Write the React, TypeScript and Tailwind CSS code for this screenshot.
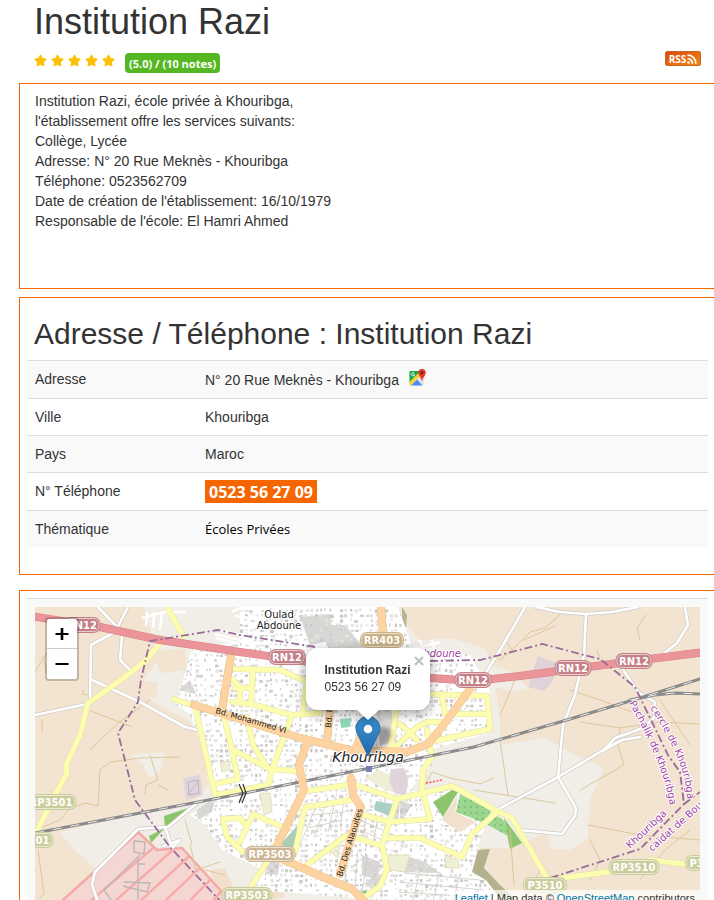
import React from "react";
import { FaStar } from "react-icons/fa";

const ORANGE_ROADS = [
  "M381 607L384 650L376 700L355 750",
  "M231 655L222 710",
  "M194 705L240 719L300 738L350 750L407 752L428 744L442 727L470 689",
  "M308 740L299 765L304 790L275 850L284 860L330 880L352 889L366 903",
  "M331 700L327 742",
  "M351 778L353 795L361 807L340 874",
];

const YELLOW_ROADS = [
  "M167 607L184 637",
  "M163 640L145 661L125 677L88 703L80 735L66 765L67 773L55 795L37 831",
  "M174 699L195 706L215 795L268 785L272 770L292 715",
  "M214 784L238 779L232 750L223 712",
  "M233 750L270 769L297 771",
  "M247 717L253 745L267 767",
  "M235 669L280 670L307 682",
  "M253 670L251 704L292 715L320 713",
  "M232 702L251 704M232 679L240 687L240 703M235 688L251 688",
  "M307 682L303 711",
  "M390 750L397 708M392 750L417 727L427 722L443 722",
  "M400 724L417 740",
  "M427 730L432 757L423 770L422 789L430 819L390 822L363 815",
  "M420 694L487 696L490 729L430 742",
  "M442 697L445 714L488 714",
  "M307 791L353 784L397 799L452 786L474 798L495 810L512 818L548 880L600 873L634 868",
  "M650 860L700 866",
  "M397 799L382 845L387 870L380 886L365 897",
  "M307 807L350 800",
  "M305 807L295 852",
  "M308 864L347 835L382 846",
  "M388 838L420 838L462 857L472 834L495 814",
  "M287 829L253 814L240 842M223 820L227 837L243 852M223 819L240 818L246 826",
  "M267 862L250 888",
];

const WHITE_ROADS = [
  "M35 715L87 704",
  "M90 703L91 645L115 632L128 607",
  "M98 607L118 628",
  "M122 635L120 660L130 670",
  "M92 680L140 702L185 727L197 730",
  "M525 607L500 650L485 674",
  "M536 607L560 612L586 614L612 612L638 607",
  "M586 614L584 655L575 695L563 725L558 777L499 809",
  "M558 777L600 752L622 740L640 737",
  "M558 777L576 808L575 816L562 834L520 830",
  "M685 607L688 625L677 643L662 655",
  "M622 668L638 692L655 702L654 718L643 728L615 738L604 750",
  "M97 900L92 884L95 872L138 829L168 827L197 803",
  "M165 827L172 848L180 840L163 846",
];

const TRACKS = [
  "M35 672L44 657L63 630M44 657L46 673",
  "M42 720L42 732M84 690L82 694L88 695",
  "M35 830L60 820L70 808L85 803L98 806L100 770L110 762L140 758L180 757",
  "M88 710L117 721L132 727M90 750L118 723L150 700",
  "M38 850L44 894L40 897M150 755L158 780L146 785L145 794M158 785L168 790",
  "M500 660L512 650L530 632L545 628L560 615M512 650L505 640",
  "M640 640L637 628L646 615M515 680L500 715M600 660L597 650",
  "M580 722L620 728L660 722L700 724M620 728L618 745L624 765L580 790",
  "M500 740L508 795M474 790L555 803M570 690L600 700L640 715",
  "M588 825L640 835L700 840M510 830L514 885M660 700L690 745",
  "M640 880L665 850L690 830M524 640L555 626M540 870L525 900",
  "M185 820L192 845M205 870L225 875M590 840L600 860L590 880",
  "M425 785L432 772L450 778L480 784L494 778M190 845L196 870L220 862",
];

const BOUNDARIES = [
  "M315 647L240 635L218 630L150 641L141 680L138 702L118 733L135 800L170 847L222 903",
  "M430 661L480 660L542 644L600 659L635 687L668 755L680 772L684 804L640 849L550 878",
  "M684 804L700 792",
];

const RAILS = [
  "M35 833L240 794L305 781L370 768L474 747L560 722L640 698L700 679",
  "M630 700L655 695L675 693L700 694",
];

const URBAN =
  "M192 648L240 642L240 607L398 607L412 645L470 655L490 690L492 732L430 750L432 765L410 790L455 790L490 815L480 840L474 868L505 900L380 900L255 890L262 870L222 850L205 825L190 815L215 797L203 745L190 715L176 705Z";

type Block = { x: number; y: number; w: number; h: number; tone: string };

const TONES = ["#d3d1ce", "#e2e0dd", "#c9c7c5", "#e8e5df", "#dbdbdb"];

// Small city blocks scattered on a slightly irregular grid.
function cityBlocks(): Block[] {
  const out: Block[] = [];
  let seed = 71;
  const next = () => {
    seed = (seed * 1103515245 + 12345) % 2147483648;
    return seed / 2147483648;
  };
  for (let y = 608; y < 904; y += 5) {
    for (let x = 174; x < 510; x += 5) {
      const a = next();
      const b = next();
      const c = next();
      if (a > 0.25) {
        out.push({ x: x + b * 2, y: y + c * 2, w: 1 + c * 3, h: 1 + a * 2.5, tone: TONES[Math.floor(b * 5)] });
      }
    }
  }
  return out;
}

const BLOCKS = cityBlocks();

function Roads({ paths, stroke, width }: { paths: string[]; stroke: string; width: number }) {
  return (
    <g fill="none" stroke={stroke} strokeWidth={width} strokeLinejoin="round" strokeLinecap="round">
      {paths.map((d) => (
        <path key={d} d={d} />
      ))}
    </g>
  );
}

function Shield({ x, y, w, label, fill }: { x: number; y: number; w: number; label: string; fill: string }) {
  return (
    <g>
      <rect x={x - w / 2} y={y - 8} width={w} height={16} rx={7} fill={fill} />
      <rect x={x - w / 2 + 1.5} y={y - 6.5} width={w - 3} height={13} rx={5.5} fill="none" stroke="#fff" strokeOpacity={0.6} />
      <text x={x} y={y + 4} textAnchor="middle" fontSize={10} fontWeight="bold" fill="#fff">
        {label}
      </text>
    </g>
  );
}

function CityMap() {
  return (
    <svg
      className="block h-full w-full"
      viewBox="35 607 665 300"
      preserveAspectRatio="xMidYMid slice"
      fontFamily='"DejaVu Sans", sans-serif'
      role="img"
      aria-label="Khouribga"
    >
      <defs>
        <clipPath id="urban">
          <path d={URBAN} />
        </clipPath>
        <clipPath id="airfield">
          <path d="M138 832L157 850L182 848L222 892L224 910L52 910Z" />
        </clipPath>
        <pattern id="orchard" width="6" height="6" patternUnits="userSpaceOnUse">
          <rect width="6" height="6" fill="#9bd68f" />
          <circle cx="3" cy="3" r="0.8" fill="#5ea458" />
        </pattern>
        <path id="pachalik" d="M629 703Q649 738 659 766Q667 785 671 812" />
        <path id="cercle" d="M650 708Q669 736 679 762Q686 780 688 804" />
      </defs>

      <rect x="35" y="607" width="665" height="300" fill="#f2e4d0" />
      <path
        d="M144 607L400 607L405 625L420 640L450 638L485 648L492 665L500 720L500 745L545 738L575 755L604 768L590 800L588 838L570 850L550 849L548 832L512 848L480 848L500 907L115 907L60 832L195 800L208 785L203 745L190 722L150 700L143 680L158 660Z"
        fill="#f1eee8"
      />
      <path d="M154 652L185 648L187 670L160 673ZM143 680L158 683L156 697L142 695Z" fill="#f2e4d0" />
      <path d="M130 755L165 752L160 772L150 778L143 765ZM488 665L512 672L528 688L512 692L486 684Z" fill="#f1eee8" />
      <path d="M402 607L407 615L406 628L402 622Z" fill="#b5b48f" />
      <path d="M35 838L60 836L98 872L60 907L35 907Z" fill="#f2e4d0" />
      <path d="M210 870L225 868L235 890L215 895ZM258 872L284 868L284 898L262 900Z" fill="#f2e0cd" />

      <path d={URBAN} fill="#fff" />
      <g clipPath="url(#urban)">
        <path
          d="M300 617L330 614L334 640L310 645ZM318 625L345 625L370 655L330 652ZM376 707L390 703L397 742L380 745ZM265 862L280 860L278 875L266 874ZM400 800L412 805L400 824ZM403 855L425 862L440 873L398 872ZM195 800L215 800L212 812L198 820ZM362 855L380 862L378 880L362 875ZM392 812L400 800L398 826ZM178 690L190 680L196 694ZM375 875L384 880L378 892L364 884Z"
          fill="#d8d7d5"
        />
        {BLOCKS.map((b, i) => (
          <rect key={i} x={b.x} y={b.y} width={b.w} height={b.h} fill={b.tone} />
        ))}
        <path
          d="M388 855L410 855L405 872L390 870ZM260 793L270 793L272 812L264 815ZM220 762L230 761L230 770L222 772ZM445 855L458 860L460 868L446 868ZM328 850L340 845L338 858Z"
          fill="#efefd6"
          stroke="#d9d3b0"
          strokeWidth="0.6"
        />
      </g>
      <path d="M365 778L378 770L400 778L405 795L385 790Z" fill="#efefd6" />
      <g fill="none" stroke="#fff" strokeWidth="2.5">
        <path d="M142 618L165 612L186 612M147 612L146 626M154 612L153 628M162 613L160 630M215 634L240 640M216 638L240 644M217 630L250 636M232 612L240 608L260 610L250 618L235 616M410 650L440 642M420 640L424 655M432 640L436 656" />
      </g>
      <g fill="none" stroke="#cfcac4" strokeWidth="0.8">
        <path d="M320 797L300 845M328 797L314 838M336 797L328 832M344 800L340 828M312 815L345 812M308 828L343 820M335 850L350 860M360 820L394 835M360 830L390 843M366 815L363 838M378 818L373 842M404 873L480 880M400 882L484 890M398 892L490 898M420 870L412 905M440 872L432 905M460 874L452 905M348 847L345 880M358 850L355 886M368 855L362 892" />
      </g>

      <path d="M391 769L404 768L408 780L406 796L394 793L389 780ZM183 778L200 775L203 795L186 800Z" fill="#dfd3dc" />
      <path d="M188 782L198 780L199 793L189 795ZM188 795L199 780" fill="none" stroke="#bba9ba" strokeWidth="0.8" />
      <path d="M538 656L560 664L552 682L544 691L528 687Z" fill="#dfd3d8" />
      <path d="M376 801L393 804L390 816L374 810Z" fill="#a9d0c6" />
      <path d="M297 826L295 848L280 845Z" fill="#a9cdb8" />
      <path d="M340 719L351 718L350 727L341 728Z" fill="#8fd9b6" />
      <path d="M164 816L188 808L165 828ZM149 836L165 828L151 843ZM433 802L452 790L458 792L443 817ZM504 818L522 843L510 849ZM361 892L366 890L368 896Z" fill="#8dc56c" />
      <path d="M460 794L491 811L484 823L456 812ZM494 814L506 822L508 836L488 825Z" fill="url(#orchard)" />
      <path d="M458 795L455 812L476 822L460 832L442 820L444 815Z" fill="#f2e0cd" />
      <path d="M478 850L490 849L484 868L500 885L522 905L505 905L486 880L472 872Z" fill="#b3b28c" />

      <g clipPath="url(#airfield)">
        <rect x="50" y="830" width="176" height="80" fill="#f4d7d2" />
        <path
          d="M40 920L150 822M62 925L172 832M88 925L182 842M114 925L196 850M140 925L208 860M166 925L218 872M192 925L226 886"
          stroke="#f9a9a6"
          strokeWidth="2.4"
        />
        <path
          d="M138 858L138 907M104 890L140 855M104 890L116 907M134 841L145 842L144 854L134 852ZM124 882L150 883L147 892L123 886M138 864L145 864"
          stroke="#bdb6b6"
          strokeWidth="1.4"
          fill="none"
        />
      </g>
      <path d="M52 910L138 832L157 850L182 848L222 892" fill="none" stroke="#f7a9a6" strokeWidth="2.5" />

      <Roads paths={TRACKS} stroke="#dcc79c" width={1} />
      <Roads paths={WHITE_ROADS} stroke="#cfcbc6" width={4} />
      <Roads paths={WHITE_ROADS} stroke="#ffffff" width={2.6} />
      <Roads paths={YELLOW_ROADS} stroke="#e2dfae" width={6} />
      <Roads paths={YELLOW_ROADS} stroke="#fdfdb0" width={5} />
      <Roads paths={RAILS} stroke="#8a8a8a" width={3} />
      <g fill="none" stroke="#e9e9e9" strokeWidth="1" strokeDasharray="9 9">
        {RAILS.map((d) => (
          <path key={d} d={d} />
        ))}
      </g>
      <Roads paths={ORANGE_ROADS} stroke="#ecc08c" width={8} />
      <Roads paths={ORANGE_ROADS} stroke="#fdd3a2" width={7} />
      <Roads
        paths={["M30 616L100 627L160 640L240 652L310 662L430 678L474 681L520 676L573 669L634 661L705 652"]}
        stroke="#d67f85"
        width={8}
      />
      <Roads
        paths={["M30 616L100 627L160 640L240 652L310 662L430 678L474 681L520 676L573 669L634 661L705 652"]}
        stroke="#eb959a"
        width={7}
      />
      <g fill="none" stroke="#9a6a9a" strokeWidth="1.8" strokeDasharray="8 3 2 3">
        {BOUNDARIES.map((d) => (
          <path key={d} d={d} />
        ))}
      </g>
      <path d="M239 784L243 793L239 803M243 784L246 793L242 803" fill="none" stroke="#333" strokeWidth="1.2" />
      <path d="M426 783L442 780" stroke="#f55" strokeWidth="1.6" strokeDasharray="2 1.5" />
      <rect x="366" y="766" width="6" height="6" fill="#7b7fb5" />

      <Shield x={82} y={625} w={37} label="RN12" fill="#c58087" />
      <Shield x={287} y={657} w={37} label="RN12" fill="#c58087" />
      <Shield x={473} y={680} w={37} label="RN12" fill="#c58087" />
      <Shield x={573} y={668} w={37} label="RN12" fill="#c58087" />
      <Shield x={634} y={661} w={37} label="RN12" fill="#c58087" />
      <Shield x={382} y={640} w={44} label="RR403" fill="#c9b183" />
      <Shield x={270} y={854} w={51} label="RP3503" fill="#cdb693" />
      <Shield x={247} y={895} w={51} label="RP3503" fill="#cacd9b" />
      <Shield x={51} y={802} w={51} label="RP3501" fill="#cacd9b" />
      <Shield x={28} y={840} w={51} label="RP3501" fill="#cacd9b" />
      <Shield x={634} y={867} w={51} label="RP3510" fill="#cacd9b" />
      <Shield x={545} y={885} w={44} label="P3510" fill="#cacd9b" />
      <Shield x={707} y={863} w={44} label="P3510" fill="#cacd9b" />

      <g fill="#222" stroke="#fff" strokeWidth="2" strokeLinejoin="round" paintOrder="stroke">
        <text x="279" y="618" fontSize="10" textAnchor="middle">Oulad</text>
        <text x="279" y="629" fontSize="10" textAnchor="middle">Abdoune</text>
        <text x="368" y="762" fontSize="14" fontStyle="italic" textAnchor="middle">Khouribga</text>
      </g>
      <g fill="#222" fontSize="8">
        <text transform="translate(215 713) rotate(16)">Bd. Mohammed VI</text>
        <text transform="translate(342 877) rotate(-73)">Bd. Des Alaouites</text>
        <text transform="translate(331 728) rotate(-86)">Bd. El Massira</text>
      </g>
      <g fill="#a33fa6" stroke="#fff" strokeWidth="2" strokeLinejoin="round" paintOrder="stroke" fontSize="10">
        <text x="461" y="657" fontStyle="italic" textAnchor="end">Abdoune</text>
        <text>
          <textPath href="#pachalik">Pachalik de Khouribga</textPath>
        </text>
        <text>
          <textPath href="#cercle">cercle de Khouribga</textPath>
        </text>
        <text transform="translate(630 849) rotate(-43)">Khouribga</text>
        <text transform="translate(652 852) rotate(-42)">caïdat de Bou</text>
      </g>
    </svg>
  );
}

function MarkerPin() {
  return (
    <svg className="block h-[41px] w-[25px] overflow-visible" viewBox="0 0 25 41" aria-hidden="true">
      <defs>
        <linearGradient id="pin" x1="0" y1="0" x2="0" y2="1">
          <stop offset="0" stopColor="#3c93d3" />
          <stop offset="1" stopColor="#2068ab" />
        </linearGradient>
        <filter id="soft" x="-50%" y="-50%" width="200%" height="200%">
          <feGaussianBlur stdDeviation="2" />
        </filter>
      </defs>
      <path d="M13 40L22 12Q36 8 36 20Q34 28 13 40Z" fill="#000" opacity="0.3" filter="url(#soft)" />
      <path
        d="M12.5 0.5C5.8 0.5 0.5 5.8 0.5 12.3C0.5 15.4 2 18.4 3.6 21.2L12.5 40L21.4 21.2C23 18.4 24.5 15.4 24.5 12.3C24.5 5.8 19.2 0.5 12.5 0.5Z"
        fill="url(#pin)"
        stroke="#2a6ba5"
      />
      <circle cx="12.5" cy="13" r="4.3" fill="#fff" />
    </svg>
  );
}

function GoogleMapsIcon() {
  return (
    <svg className="h-[17px] w-[17px]" viewBox="0 0 17 17" aria-hidden="true">
      <rect x="0.5" y="2" width="14.5" height="14.5" rx="1" fill="#e4e6ea" />
      <path d="M0.5 3Q0.5 2 1.5 2H12L0.5 14Z" fill="#1fa745" />
      <path d="M0.5 13L10 3.5L12 6L1.5 16.5H0.5Z" fill="#fdd22e" />
      <path d="M2 16.5L8 10.5L13.5 16.5Z" fill="#4a8af4" />
      <path d="M5.3 4.3A1.6 1.6 0 1 0 5.6 5.7H4.2" fill="none" stroke="#fff" strokeWidth="0.9" />
      <path d="M13 0A3.8 3.8 0 0 0 9.2 3.8C9.2 6.5 12 8 13 12.5C14 8 16.8 6.5 16.8 3.8A3.8 3.8 0 0 0 13 0Z" fill="#e33b2e" />
      <circle cx="13" cy="3.8" r="1.5" fill="#7e1a12" />
    </svg>
  );
}

function RssIcon() {
  return (
    <svg className="h-[10px] w-[10px]" viewBox="0 0 10 10" fill="none" stroke="#fff" strokeWidth="1.7" aria-hidden="true">
      <path d="M0.5 1.2A8 8 0 0 1 8.8 9.8M0.5 4.6A4.8 4.8 0 0 1 5.4 9.8" />
      <circle cx="1.5" cy="8.5" r="1.3" fill="#fff" stroke="none" />
    </svg>
  );
}

const DETAILS = [
  "Institution Razi, école privée à Khouribga,",
  "l'établissement offre les services suivants:",
  "Collège, Lycée",
  "Adresse: N° 20 Rue Meknès - Khouribga",
  "Téléphone: 0523562709",
  "Date de création de l'établissement: 16/10/1979",
  "Responsable de l'école: El Hamri Ahmed",
];

function Row({ label, children }: { label: string; children: React.ReactNode }) {
  return (
    <tr className="border-t border-[#dddddd] odd:bg-[#f9f9f9]">
      <th scope="row" className="w-[170px] p-2 text-left align-top font-normal">
        {label}
      </th>
      <td className="p-2 align-top">{children}</td>
    </tr>
  );
}

export default function App() {
  return (
    <div className="h-screen overflow-hidden bg-white font-['Liberation_Sans',Arial,sans-serif] text-sm leading-5 text-[#333333]">
      <main className="-mr-0.5 ml-[19px]">
        <header className="px-[15px]">
          <h1 className="pt-0.5 text-4xl leading-10">Institution Razi</h1>
          <div className="flex items-start justify-between pb-2.5 pt-[9px]">
            <div className="flex items-center gap-2.5">
              <div className="flex gap-1 pb-1 text-[#ffc107]" role="img" aria-label="5.0">
                {[1, 2, 3, 4, 5].map((n) => (
                  <FaStar key={n} className="h-[13px] w-[13px]" />
                ))}
              </div>
              <span className="mt-0.5 h-5 rounded bg-[#55b823] px-1 font-['Open_Sans',sans-serif] text-[11px] font-bold leading-[22px] text-white">
                (5.0) / (10 notes)
              </span>
            </div>
            <a
              href="#rss"
              className="flex h-[15px] w-9 items-center justify-center gap-px rounded-[2px] border border-[#c9682c] bg-linear-to-br from-[#d9480f] to-[#f5870a] font-['Open_Sans',sans-serif] text-[10px] font-bold text-white"
            >
              RSS
              <RssIcon />
            </a>
          </div>
        </header>

        <section className="border border-[#f26500] px-[15px] pb-[57px] pt-[7px]">
          {DETAILS.map((line) => (
            <p key={line}>{line}</p>
          ))}
        </section>

        <section className="mt-2 border border-[#f26500] px-[7px] pb-[27px] pt-[19px]">
          <h2 className="mb-2.5 pl-[7px] text-3xl leading-[33px]">Adresse / Téléphone : Institution Razi</h2>
          <table className="w-full border-collapse">
            <tbody>
              <Row label="Adresse">
                <div className="flex h-[21px] items-start gap-2.5">
                  <span className="pt-px">N° 20 Rue Meknès - Khouribga</span>
                  <a href="#maps" aria-label="Google Maps">
                    <GoogleMapsIcon />
                  </a>
                </div>
              </Row>
              <Row label="Ville">Khouribga</Row>
              <Row label="Pays">Maroc</Row>
              <Row label="N° Téléphone">
                <div className="flex h-[21px] items-center">
                  <a
                    href="tel:0523562709"
                    className="h-[23px] bg-[#f56600] px-1 font-['Open_Sans',sans-serif] text-base font-bold leading-6 text-white"
                  >
                    0523 56 27 09
                  </a>
                </div>
              </Row>
              <Row label="Thématique">
                <a href="#ecoles" className="font-['Open_Sans',sans-serif] text-[13px] text-black">
                  Écoles Privées
                </a>
              </Row>
            </tbody>
          </table>
        </section>

        <section className="mt-[15px] border border-[#f26500] p-[7px]">
          <div className="border-t border-[#dddddd] bg-[#f9f9f9] p-2">
            <div className="relative h-[300px] overflow-hidden bg-[#dddddd]">
              <CityMap />

              <div className="absolute left-2.5 top-2.5 flex w-[34px] flex-col overflow-hidden rounded border-2 border-black/20 bg-white bg-clip-padding text-black">
                <button type="button" aria-label="Zoom in" className="flex h-[30px] items-center justify-center border-b border-[#cccccc]">
                  <svg className="h-[14px] w-[14px]" viewBox="0 0 14 14" stroke="currentColor" aria-hidden="true">
                    <path d="M0.5 7H13.5" strokeWidth="2" />
                    <path d="M7 1V13" strokeWidth="2.6" />
                  </svg>
                </button>
                <button type="button" aria-label="Zoom out" className="flex h-[30px] items-center justify-center">
                  <svg className="h-[14px] w-[14px]" viewBox="0 0 14 14" stroke="currentColor" aria-hidden="true">
                    <path d="M0.5 7H13.5" strokeWidth="2" />
                  </svg>
                </button>
              </div>

              <div className="absolute left-1/2 top-[109px] -translate-x-1/2">
                <MarkerPin />
              </div>

              <div className="absolute left-1/2 top-[41px] flex -translate-x-1/2 flex-col items-center drop-shadow-[0_3px_6px_rgba(0,0,0,0.4)]">
                <div className="relative whitespace-nowrap rounded-xl bg-white px-[19px] py-3.5 text-xs leading-[17px]">
                  <strong className="block">Institution Razi</strong>
                  0523 56 27 09
                  <button type="button" aria-label="Close" className="absolute right-1.5 top-2 text-[#c3c3c3]">
                    <svg className="h-[10px] w-[10px]" viewBox="0 0 10 10" stroke="currentColor" strokeWidth="2.4" aria-hidden="true">
                      <path d="M1 1L9 9M9 1L1 9" />
                    </svg>
                  </button>
                </div>
                <svg className="h-2.5 w-[22px]" viewBox="0 0 22 10" aria-hidden="true">
                  <path d="M0 0H22L11 10Z" fill="#fff" />
                </svg>
              </div>

              <div className="absolute bottom-0 right-0 bg-white/70 px-[5px] text-[11px] leading-[17px]">
                <a href="#leaflet" className="text-[#0078a8]">Leaflet</a> | Map data ©{" "}
                <a href="#osm" className="text-[#0078a8]">OpenStreetMap</a> contributors
              </div>
            </div>
          </div>
        </section>
      </main>
    </div>
  );
}
